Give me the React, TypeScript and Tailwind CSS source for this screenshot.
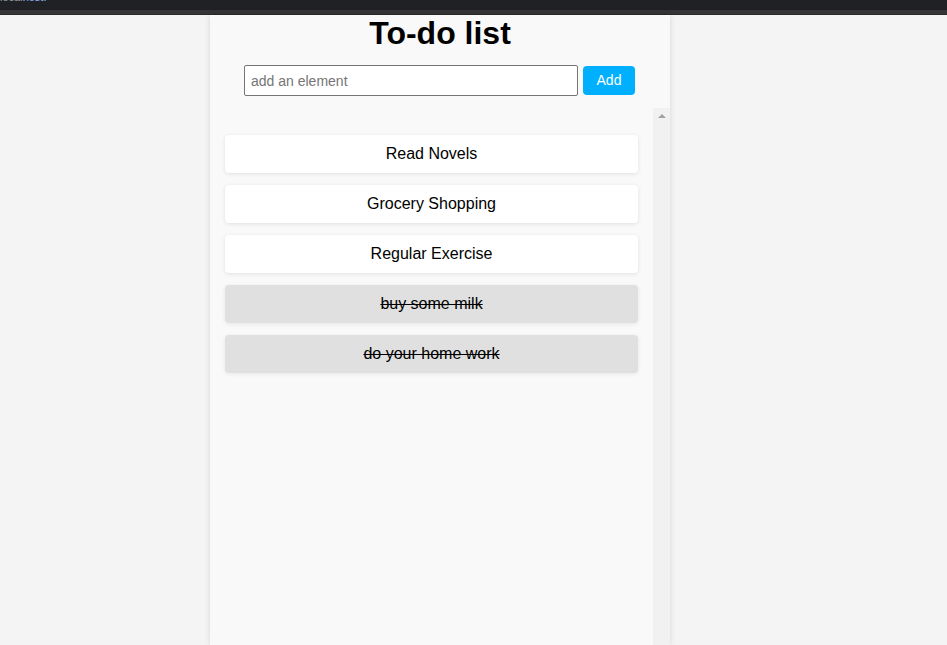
import React from "react";

const items = [
  { text: "Read Novels", done: false },
  { text: "Grocery Shopping", done: false },
  { text: "Regular Exercise", done: false },
  { text: "buy some milk", done: true },
  { text: "do your home work", done: true },
];

export default function App() {
  return (
    <div
      className="h-[645px] w-full overflow-hidden bg-[#f4f4f4] flex flex-col"
      style={{ fontFamily: '"Liberation Sans", Arial, sans-serif' }}
    >
      <div className="h-[10px] bg-[#202124] overflow-hidden shrink-0">
        <div className="text-[11px] leading-[11px] -mt-[8px] pl-[0px] text-[#8ab4f8] whitespace-nowrap">
          <span className="text-[#9aa0a6]">local</span>host:
        </div>
      </div>
      <div className="h-[4px] bg-[#353535] shrink-0" />
      <div className="h-[1px] bg-[#2a2a2a] shrink-0" />
      <div className="flex-1 flex min-h-0">
        <div className="ml-[210px] w-[460px] bg-[#f9f9f9] shadow-[0_0_6px_rgba(0,0,0,0.12)] flex flex-col min-h-0">
          <h1 className="text-[32px] leading-[37px] font-bold text-center text-black">
            To-do list
          </h1>
          <div className="mt-[13px] flex items-center gap-[5px] pl-[34px]">
            <input
              className="w-[334px] h-[31px] border border-[#767676] rounded-[2px] bg-white px-[6px] text-[14px] text-black placeholder:text-[#757575] outline-none"
              placeholder="add an element"
            />
            <button className="w-[52px] h-[29px] bg-[#00b0ff] text-white text-[14px] rounded-[4px]">
              Add
            </button>
          </div>
          <div className="mt-[12px] flex-1 flex min-h-0">
            <div className="flex-1 px-[15px] pt-[27px] flex flex-col gap-[12px]">
              {items.map((it) => (
                <div
                  key={it.text}
                  className={
                    it.done
                      ? "h-[38px] flex items-center justify-center rounded-[4px] bg-[#e0e0e0] text-[16px] text-black line-through shadow-[0_1px_4px_rgba(0,0,0,0.08)]"
                      : "h-[38px] flex items-center justify-center rounded-[4px] bg-white text-[16px] text-black shadow-[0_1px_4px_rgba(0,0,0,0.1)]"
                  }
                >
                  {it.text}
                </div>
              ))}
            </div>
            <div className="w-[17px] bg-[#f1f1f1] flex justify-center pt-[6px]">
              <svg width="8" height="4" viewBox="0 0 8 4">
                <polygon points="0,4 8,4 4,0" fill="#a3a3a3" />
              </svg>
            </div>
          </div>
        </div>
      </div>
    </div>
  );
}
